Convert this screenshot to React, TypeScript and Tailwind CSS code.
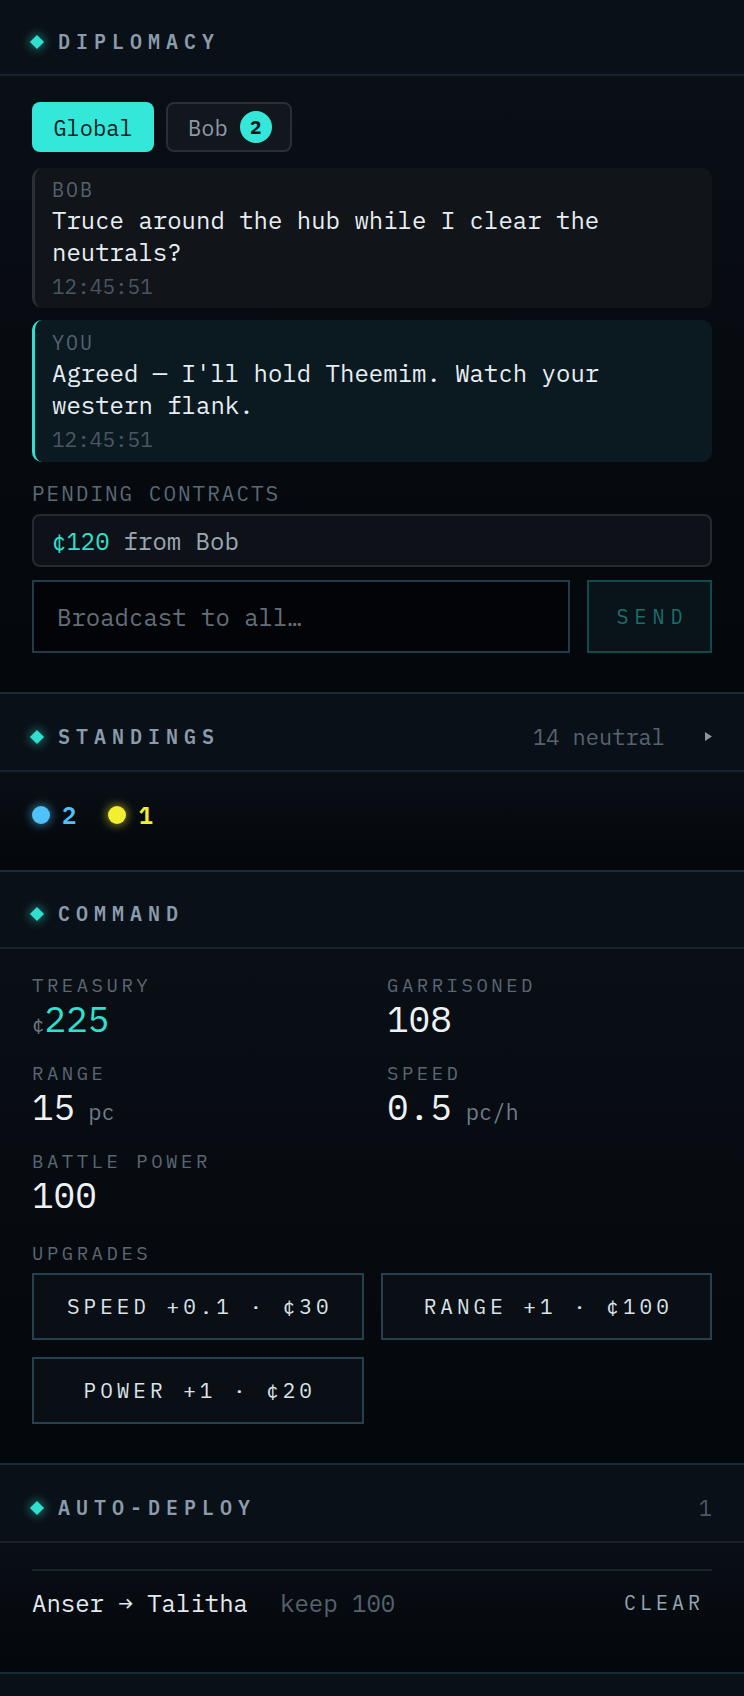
import React from 'react';

const Diamond = () => (
  <span className="inline-block w-[10px] h-[10px] rotate-45 bg-[#2fe0d0] shadow-[0_0_10px_2px_rgba(47,224,208,0.4)]" />
);

function SectionHeader({ title, right, tall }: { title: string; right?: React.ReactNode; tall?: string }) {
  return (
    <div
      className={`flex items-center justify-between ${tall ?? 'h-[78px]'} pt-[9px] px-[32px] bg-[#0a1017] border-b-2 border-[#16232e]`}
    >
      <div className="flex items-center gap-[16px]">
        <Diamond />
        <h2 className="text-[20px] leading-[24px] font-semibold tracking-[6px] text-[#8a9cab]">{title}</h2>
      </div>
      {right}
    </div>
  );
}

function Message({ from, text, time, mine }: { from: string; text: string; time: string; mine?: boolean }) {
  return (
    <div
      className={
        mine
          ? 'rounded-[10px] border-l-[3px] border-[#2fe0d0] bg-[#0b1a20] pl-[17px] pr-[20px] pt-[9px] pb-[9px]'
          : 'rounded-[10px] border-l-[3px] border-[#2a2e35] bg-[#111419] pl-[17px] pr-[20px] py-[8px]'
      }
    >
      <div className="text-[20px] leading-[28px] tracking-[2px] text-[#56626e]">{from}</div>
      <div className="text-[24px] leading-[32px] text-[#e8eef3]">{text}</div>
      <div className="mt-[4px] text-[21px] leading-[28px] text-[#4a5662]">{time}</div>
    </div>
  );
}

function Stat({ label, children }: { label: string; children: React.ReactNode }) {
  return (
    <div>
      <div className="text-[19px] leading-[24px] tracking-[3.5px] text-[#5a6673]">{label}</div>
      <div className="mt-[2px] h-[40px] flex items-baseline text-[36px] leading-[40px] text-[#eef2f5]">{children}</div>
    </div>
  );
}

const bodyBg = 'bg-linear-to-b from-[#0a0f16] to-[#04070b]';

export default function App() {
  return (
    <div className="w-[744px] min-h-[1696px] bg-[#0a1017] font-['IBM_Plex_Mono','DejaVu_Sans_Mono',monospace]">
      {/* Diplomacy */}
      <section className="border-b-2 border-[#1a2b38]">
        <SectionHeader title="DIPLOMACY" tall="h-[76px]" />
        <div className={`${bodyBg} px-[32px] pt-[26px] pb-[39px]`}>
          <div className="flex gap-[12px]">
            <button className="h-[50px] w-[122px] rounded-[8px] bg-[#34e8d9] text-[22px] text-[#0a1a1e]">Global</button>
            <button className="h-[50px] flex items-center rounded-[8px] border-2 border-[#2a2f37] bg-[#12161d] pl-[20px] pr-[18px] text-[22px] text-[#8d9aa6]">
              Bob
              <span className="ml-[12px] w-[32px] h-[32px] rounded-full bg-[#34e8d9] flex items-center justify-center text-[19px] font-bold text-[#0a1a1e]">
                2
              </span>
            </button>
          </div>

          <div className="mt-[16px] flex flex-col gap-[12px]">
            <Message from="BOB" text="Truce around the hub while I clear the neutrals?" time="12:45:51" />
            <Message from="YOU" text="Agreed — I'll hold Theemim. Watch your western flank." time="12:45:51" mine />
          </div>

          <div className="mt-[16px] text-[21px] leading-[30px] tracking-[2px] text-[#5b6976]">PENDING CONTRACTS</div>
          <div className="mt-[6px] h-[53px] flex items-center rounded-[8px] border-2 border-[#262a31] bg-[#0e1218] px-[18px] text-[24px]">
            <span className="text-[#2fe0d0]">¢120</span>
            <span className="ml-[14px] text-[#9aa8b4]">from Bob</span>
          </div>

          <div className="mt-[13px] flex gap-[17px]">
            <input
              placeholder="Broadcast to all…"
              className="h-[73px] flex-1 min-w-0 border-2 border-[#233a4a] bg-[#020408] px-[23px] text-[24px] text-[#e8eef3] placeholder:text-[#656e78] outline-none"
            />
            <button className="h-[73px] w-[125px] border-2 border-[#0f4b4b] bg-[#08141a] text-[20px] tracking-[6px] pl-[6px] text-[#1d6f6b]">
              SEND
            </button>
          </div>
        </div>
      </section>

      {/* Standings */}
      <section className="border-b-2 border-[#1a2b38]">
        <SectionHeader
          title="STANDINGS"
          right={
            <div className="flex items-center">
              <span className="text-[22px] text-[#566470]">14 neutral</span>
              <svg className="ml-[40px]" width="7" height="9" viewBox="0 0 7 9">
                <path d="M0 0 L7 4.5 L0 9 Z" fill="#8795a1" />
              </svg>
            </div>
          }
        />
        <div className={`${bodyBg} px-[32px] pt-[26px] pb-[38px]`}>
          <div className="h-[34px] flex items-center">
            <span className="w-[18px] h-[18px] rounded-full bg-[#4fc3f7] shadow-[0_0_8px_2px_rgba(79,195,247,0.45)]" />
            <span className="ml-[12px] text-[24px] font-semibold text-[#4fc3f7]">2</span>
            <span className="ml-[32px] w-[18px] h-[18px] rounded-full bg-[#f2ee30] shadow-[0_0_8px_2px_rgba(242,238,48,0.45)]" />
            <span className="ml-[12px] text-[24px] font-semibold text-[#f2ee30]">1</span>
          </div>
        </div>
      </section>

      {/* Command */}
      <section className="border-b-2 border-[#1a2b38]">
        <SectionHeader title="COMMAND" tall="h-[77px]" />
        <div className={`${bodyBg} px-[32px] pt-[24px] pb-[39px]`}>
          <div className="grid grid-cols-2 gap-x-[30px] gap-y-[22px]">
            <Stat label="TREASURY">
              <span className="text-[21px] text-[#6b7885]">¢</span>
              <span className="text-[#2fe0d0]">225</span>
            </Stat>
            <Stat label="GARRISONED">108</Stat>
            <Stat label="RANGE">
              15<span className="ml-[13px] text-[22px] text-[#6f7c88]">pc</span>
            </Stat>
            <Stat label="SPEED">
              0.5<span className="ml-[14px] text-[22px] text-[#6f7c88]">pc/h</span>
            </Stat>
            <Stat label="BATTLE POWER">100</Stat>
          </div>

          <div className="mt-[26px] text-[19px] leading-[24px] tracking-[3.5px] text-[#5a6673]">UPGRADES</div>
          <div className="mt-[8px] grid grid-cols-2 gap-[17px]">
            {['SPEED +0.1 · ¢30', 'RANGE +1 · ¢100', 'POWER +1 · ¢20'].map((u) => (
              <button
                key={u}
                className="h-[67px] border-2 border-[#27404f] bg-[#0a0e15] text-[21px] tracking-[4px] pl-[4px] text-[#dbe3e9]"
              >
                {u}
              </button>
            ))}
          </div>
        </div>
      </section>

      {/* Auto-deploy */}
      <section className="border-b-2 border-[#1a2b38]">
        <SectionHeader title="AUTO-DEPLOY" right={<span className="text-[22px] text-[#4c5864]">1</span>} />
        <div className={`${bodyBg} px-[32px] pt-[26px] pb-[37px]`}>
          <div className="h-[66px] flex items-center border-t-2 border-[#18242e] text-[24px]">
            <span className="text-[#e3e9ee]">Anser → Talitha</span>
            <span className="ml-[32px] text-[#55626e]">keep 100</span>
            <button className="ml-auto mr-[8px] text-[20px] tracking-[4px] text-[#97a5b1]">CLEAR</button>
          </div>
        </div>
      </section>

      <div className="h-[40px] bg-[#0a1017]" />
    </div>
  );
}
